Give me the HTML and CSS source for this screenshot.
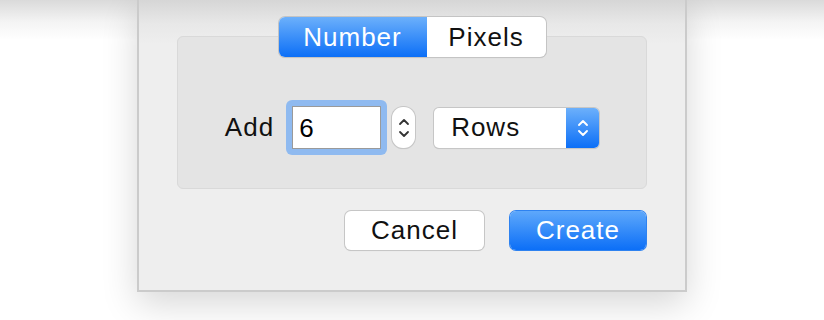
FILE: index.html
```html
<!DOCTYPE html>
<html lang="en">
<head>
  <meta charset="UTF-8">
  <title>Add Rows</title>
  <link rel="stylesheet" href="styles.css">
</head>
<body>
  <div class="sheet">
    <div class="segmented">
      <span class="seg seg-on">Number</span>
      <span class="seg">Pixels</span>
    </div>

    <div class="groupbox">
      <label class="add-label" for="count">Add</label>
      <div class="field-ring">
        <input type="text" id="count" class="field" value="6">
      </div>
      <div class="stepper">
        <svg width="12" height="30" viewBox="0 0 12 30">
          <path d="M2 11 L6 7 L10 11" fill="none" stroke="#333" stroke-width="1.8" stroke-linecap="round" stroke-linejoin="round"/>
          <path d="M2 19 L6 23 L10 19" fill="none" stroke="#333" stroke-width="1.8" stroke-linecap="round" stroke-linejoin="round"/>
        </svg>
      </div>
      <div class="popup">
        <span class="popup-text">Rows</span>
        <span class="popup-arrows">
          <svg width="14" height="30" viewBox="0 0 14 30">
            <path d="M3 12 L7 8 L11 12" fill="none" stroke="#fff" stroke-width="1.9" stroke-linecap="round" stroke-linejoin="round"/>
            <path d="M3 18 L7 22 L11 18" fill="none" stroke="#fff" stroke-width="1.9" stroke-linecap="round" stroke-linejoin="round"/>
          </svg>
        </span>
      </div>
    </div>

    <div class="actions">
      <button class="btn">Cancel</button>
      <button class="btn btn-primary">Create</button>
    </div>
  </div>
</body>
</html>
```

FILE: styles.css
```css
html {
  box-sizing: border-box;
}
*, *:before, *:after {
  box-sizing: inherit;
}
body {
  margin: 0;
  height: 320px;
  overflow: hidden;
  font-family: "Liberation Sans", Arial, sans-serif;
  letter-spacing: 1px;
  background: linear-gradient(#dadada, #f4f4f4 22px, #ffffff 40px);
}
.sheet {
  width: 550px;
  height: 292px;
  margin: 0 auto;
  padding: 17px 38px 0;
  border: 2px solid #cbcbcb;
  border-top: none;
  background: linear-gradient(#d6d6d6, #e8e8e8 24px, #eeeeee 44px);
  box-shadow: 0 12px 34px rgba(0, 0, 0, 0.16);
}
.segmented {
  position: relative;
  z-index: 1;
  display: flex;
  width: 267px;
  height: 40px;
  margin: 0 auto;
  border-radius: 6px;
  background: #fff;
  box-shadow: 0 0 0 1px #c4c4c4, 0 1px 1px rgba(0, 0, 0, 0.12);
  overflow: hidden;
}
.seg {
  display: flex;
  align-items: center;
  justify-content: center;
  flex: 1;
  font-size: 26px;
  color: #111;
}
.seg-on {
  flex: 0 0 148px;
  color: #fff;
  background: linear-gradient(#6cb0fb, #0c6ff7);
}
.groupbox {
  display: flex;
  align-items: center;
  justify-content: center;
  height: 153px;
  margin-top: -21px;
  padding-top: 30px;
  border: 1px solid #d9d9d9;
  border-radius: 6px;
  background: #e4e4e4;
}
.add-label {
  font-size: 26px;
  color: #111;
  margin-right: 12px;
}
.field-ring {
  padding: 6px;
  border-radius: 6px;
  background: #8fbaf0;
}
.field {
  display: block;
  width: 89px;
  height: 43px;
  margin: 0;
  padding: 2px 0 0 6px;
  border: 1px solid #9a9a9a;
  border-radius: 0;
  outline: none;
  background: #fff;
  font-family: "Liberation Sans", Arial, sans-serif;
  font-size: 26px;
  color: #000;
}
.stepper {
  display: flex;
  align-items: center;
  justify-content: center;
  width: 23px;
  height: 41px;
  margin-left: 5px;
  border-radius: 11px;
  background: #fff;
  box-shadow: 0 0 0 1px #c6c6c6, 0 1px 1px rgba(0, 0, 0, 0.15);
}
.popup {
  display: flex;
  width: 165px;
  height: 40px;
  margin-left: 19px;
  border-radius: 5px;
  background: #fff;
  box-shadow: 0 0 0 1px #c6c6c6, 0 1px 1px rgba(0, 0, 0, 0.15);
  overflow: hidden;
}
.popup-text {
  flex: 1;
  display: flex;
  align-items: center;
  padding-left: 17px;
  font-size: 26px;
  color: #111;
}
.popup-arrows {
  display: flex;
  align-items: center;
  justify-content: center;
  width: 33px;
  background: linear-gradient(#6cb0fb, #0c6ff7);
}
.actions {
  display: flex;
  justify-content: flex-end;
  gap: 26px;
  margin-top: 22px;
  padding-right: 1px;
}
.btn {
  height: 39px;
  width: 139px;
  border: none;
  border-radius: 6px;
  background: #fff;
  box-shadow: 0 0 0 1px #c6c6c6, 0 1px 1px rgba(0, 0, 0, 0.15);
  font-family: "Liberation Sans", Arial, sans-serif;
  font-size: 26px;
  letter-spacing: 1px;
  color: #111;
}
.btn-primary {
  width: 136px;
  color: #fff;
  background: linear-gradient(#5ea8fb, #0c6ff7);
  box-shadow: 0 0 0 1px #2e82f0;
}
```
